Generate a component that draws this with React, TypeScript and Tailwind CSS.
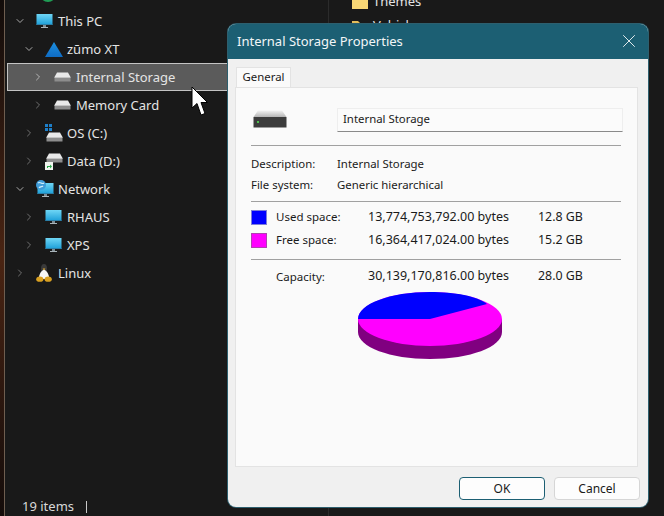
import { ChevronDown, ChevronRight, X } from "lucide-react";
import type { ReactNode } from "react";

function Monitor() {
  return (
    <svg width="17" height="16" viewBox="0 0 17 16">
      <defs>
        <linearGradient id="screen" x1="0" y1="0" x2="0" y2="1">
          <stop offset="0" stopColor="#6fd6f5" />
          <stop offset="1" stopColor="#1b9ed8" />
        </linearGradient>
      </defs>
      <rect x="0.5" y="1" width="16" height="11" fill="url(#screen)" />
      <rect x="0.5" y="11" width="16" height="1" fill="#2b7fa8" />
      <rect x="7" y="12" width="3" height="2" fill="#7d8b92" />
      <rect x="5" y="14" width="7" height="1" fill="#a9b4ba" />
    </svg>
  );
}

function Drive() {
  return (
    <svg width="17" height="10" viewBox="0 0 17 10">
      <path d="M3 0.5H14L16.5 5H0.5Z" fill="#e9e9e9" />
      <rect x="0.5" y="5" width="16" height="4.5" fill="#8d8d8d" />
      <rect x="0.5" y="5" width="16" height="1" fill="#c4c4c4" />
    </svg>
  );
}

function Delta() {
  return (
    <svg width="18" height="15" viewBox="0 0 18 15">
      <defs>
        <linearGradient id="delta" x1="0" y1="0" x2="0" y2="1">
          <stop offset="0" stopColor="#1c8fe0" />
          <stop offset="1" stopColor="#0f6cc4" />
        </linearGradient>
      </defs>
      <path d="M9 0L18 15H0Z" fill="url(#delta)" />
    </svg>
  );
}

function OsDrive() {
  return (
    <span className="relative block h-[18px] w-[18px]">
      <span className="absolute bottom-0 left-[1px] flex">
        <Drive />
      </span>
      <svg className="absolute left-0 top-0" width="7" height="7" viewBox="0 0 7 7">
        <rect width="3" height="3" fill="#1d7fc9" />
        <rect x="4" width="3" height="3" fill="#1d7fc9" />
        <rect y="4" width="3" height="3" fill="#1d7fc9" />
        <rect x="4" y="4" width="3" height="3" fill="#1d7fc9" />
      </svg>
    </span>
  );
}

function DataDrive() {
  return (
    <span className="relative block h-[18px] w-[18px]">
      <span className="absolute left-[1px] top-[1px] flex">
        <Drive />
      </span>
      <svg className="absolute bottom-0 left-0" width="8" height="8" viewBox="0 0 8 8">
        <rect width="8" height="8" fill="#f2f6f0" />
        <path d="M2 6V4H5V2.5L7 4.5L5 6.5V5H3V6Z" fill="#2aa84a" />
      </svg>
    </span>
  );
}

function NetworkIcon() {
  return (
    <span className="relative block h-[18px] w-[18px]">
      <span className="absolute left-[1px] top-[2px] flex">
        <Monitor />
      </span>
      <svg className="absolute left-0 top-0" width="10" height="10" viewBox="0 0 10 10">
        <circle cx="5" cy="5" r="5" fill="#3f9bd8" />
        <path d="M2 3C4 1 6 5 8 3M3 8C4 6 6 7 7 6" stroke="#cfeefa" strokeWidth="1.2" fill="none" />
      </svg>
    </span>
  );
}

function Tux() {
  return (
    <svg width="16" height="18" viewBox="0 0 16 18">
      <ellipse cx="8" cy="4.5" rx="3" ry="4.5" fill="#3a3a3a" />
      <path d="M8 5.5C5 7 2.5 11 3 15H13C13.5 11 11 7 8 5.5Z" fill="#f6f6f6" />
      <path d="M6.6 4.6H9.4L8 6.2Z" fill="#e6ac2a" />
      <ellipse cx="3.8" cy="15.2" rx="3.6" ry="2.6" fill="#d9a021" />
      <ellipse cx="12.2" cy="15.2" rx="3.6" ry="2.6" fill="#d9a021" />
    </svg>
  );
}

type Row = {
  label: string;
  level: number;
  open?: boolean;
  selected?: boolean;
  icon: ReactNode;
};

const treeRows: Row[] = [
  { label: "This PC", level: 0, open: true, icon: <Monitor /> },
  { label: "zūmo XT", level: 1, open: true, icon: <Delta /> },
  { label: "Internal Storage", level: 2, selected: true, icon: <Drive /> },
  { label: "Memory Card", level: 2, icon: <Drive /> },
  { label: "OS (C:)", level: 1, icon: <OsDrive /> },
  { label: "Data (D:)", level: 1, icon: <DataDrive /> },
  { label: "Network", level: 0, open: true, icon: <NetworkIcon /> },
  { label: "RHAUS", level: 1, icon: <Monitor /> },
  { label: "XPS", level: 1, icon: <Monitor /> },
  { label: "Linux", level: 0, icon: <Tux /> },
];

const indents = ["pl-[9px]", "pl-[18px]", "pl-[27px]"];

function TreeRow({ row }: { row: Row }) {
  return (
    <div
      className={`flex h-[28px] items-center ${
        row.selected ? "border border-[#c4c4c4] bg-[#5b5b5b] pl-[26px]" : indents[row.level]
      }`}
    >
      <span className="flex w-[20px] shrink-0 justify-start">
        {row.open ? (
          <ChevronDown size={12} strokeWidth={2} className="-ml-[2px] text-[#a8a8a8]" />
        ) : (
          <ChevronRight size={12} strokeWidth={2} className={`-ml-[2px] ${row.selected ? "text-[#b5b5b5]" : "text-[#6f6f6f]"}`} />
        )}
      </span>
      <span className="flex w-[22px] shrink-0 justify-start">{row.icon}</span>
      <span className="whitespace-nowrap pt-[2px] text-[13px] text-[#e4e4e4]">{row.label}</span>
    </div>
  );
}

function FolderIcon() {
  return (
    <svg width="16" height="13" viewBox="0 0 16 13" className="shrink-0">
      <path d="M0 1H6L8 3H16V13H0Z" fill="#e2bd5a" />
      <rect y="4" width="16" height="9" fill="#f8d775" />
    </svg>
  );
}

function Pie() {
  return (
    <svg width="146" height="70" viewBox="0 0 146 70">
      <path d="M1 28V41C1 56 33 68 73 68S145 56 145 41V28Z" fill="#800080" />
      <ellipse cx="73" cy="28" rx="72" ry="27" fill="#ff00ff" />
      <path d="M73 28H1C1 13 33 1 73 1C98 1 120 5 130 13Z" fill="#0000ff" />
    </svg>
  );
}

function Rule() {
  return <div className="h-px bg-[#a0a0a0]" />;
}

function SpaceRow({
  swatch,
  label,
  bytes,
  size,
}: {
  swatch?: string;
  label: string;
  bytes: string;
  size: string;
}) {
  return (
    <div className="flex h-[23px] items-center text-[11.5px]">
      <span className={`h-[15px] w-[16px] shrink-0 border ${swatch ?? "border-transparent"}`} />
      <span className="ml-[9px] w-[92px] shrink-0">{label}</span>
      <span className="w-[170px] shrink-0 text-[12.5px]">{bytes}</span>
      <span className="text-[12.4px]">{size}</span>
    </div>
  );
}

function PropertiesDialog() {
  return (
    <div className="absolute left-[228px] top-[24px] flex h-[483px] w-[420px] flex-col overflow-hidden rounded-lg bg-[#f0f0f0] text-[11.4px] text-[#1a1a1a] shadow-[0_0_0_1px_#2d5f6e]">
      <div className="flex h-[35px] shrink-0 items-center justify-between bg-[#1c5f73] pl-[9px] pr-[8px] pt-[1px] text-[#f2f6f7]">
        <span className="text-[13px]">Internal Storage Properties</span>
        <X size={22} strokeWidth={1} className="-mt-[2px]" />
      </div>
      <div className="flex-1 px-[7px] pt-[8px]">
        <div className="ml-[1px] flex h-[20px] w-[55px] items-center justify-center border border-b-0 border-[#e3e3e3] bg-[#fafafa] pb-[2px]">
          General
        </div>
        <div className="h-[380px] w-[403px] border border-[#e3e3e3] bg-[#fafafa] pl-[15px] pr-[16px]">
          <div className="flex h-[57px] items-start pt-[20px]">
            <svg width="34" height="18" viewBox="0 0 34 18" className="ml-[2px] mt-[2px] shrink-0">
              <defs>
                <linearGradient id="bigDrive" x1="0" y1="0" x2="0" y2="1">
                  <stop offset="0" stopColor="#f2f2f2" />
                  <stop offset="1" stopColor="#b5b5b5" />
                </linearGradient>
              </defs>
              <path d="M5 0.5H29L33.5 7H0.5Z" fill="url(#bigDrive)" />
              <rect x="0.5" y="7" width="33" height="10.5" fill="#3c3c3c" />
              <rect x="4" y="11" width="2" height="2" fill="#4fc04f" />
            </svg>
            <div className="ml-[50px] flex h-[24px] w-[286px] shrink-0 items-center border border-[#eeeeee] border-b-[#8a8a8a] bg-[#fbfbfb] pb-[2px] pl-[5px]">
              Internal Storage
            </div>
          </div>
          <Rule />
          <div className="flex h-[55px] flex-col justify-center gap-[4px] pt-[2px]">
            <div className="flex h-[17px] items-center">
              <span className="w-[86px]">Description:</span>
              <span>Internal Storage</span>
            </div>
            <div className="flex h-[17px] items-center">
              <span className="w-[86px]">File system:</span>
              <span>Generic hierarchical</span>
            </div>
          </div>
          <Rule />
          <div className="flex h-[57px] flex-col justify-center pb-[4px]">
            <SpaceRow swatch="border-[#7f7fd8] bg-[#0000ff]" label="Used space:" bytes="13,774,753,792.00 bytes" size="12.8 GB" />
            <SpaceRow swatch="border-[#b23fb2] bg-[#ff00ff]" label="Free space:" bytes="16,364,417,024.00 bytes" size="15.2 GB" />
          </div>
          <Rule />
          <div className="mt-[5px]">
            <SpaceRow label="Capacity:" bytes="30,139,170,816.00 bytes" size="28.0 GB" />
          </div>
          <div className="flex justify-center pr-[12px] pt-[3px]">
            <Pie />
          </div>
        </div>
      </div>
      <div className="flex h-[40px] shrink-0 items-start justify-end gap-[9px] pr-[8px] pt-[10px]">
        <button className="h-[23px] w-[86px] rounded-[4px] border border-[#1c5f73] bg-[#fdfdfd] text-[12px]">OK</button>
        <button className="h-[23px] w-[86px] rounded-[4px] border border-[#d6d6d6] bg-[#fdfdfd] text-[12px]">Cancel</button>
      </div>
    </div>
  );
}

export default function App() {
  return (
    <div className="relative flex h-[516px] w-[664px] overflow-hidden bg-[#191919] font-['Noto_Sans','Open_Sans',sans-serif]">
      {/* desktop showing behind the window */}
      <div className="w-[5px] shrink-0 border-r border-[#6e5e50] bg-gradient-to-b from-[#120c0a] via-[#4a2412] to-[#140c0a]" />

      <div className="flex w-[323px] shrink-0 flex-col">
        <div className="-mt-[35px] flex-1 pt-[14px] pl-[2px]">
          {/* row scrolled out of view, only the bottom of its icon shows */}
          <div className="flex h-[28px] items-center pl-[33px]">
            <span className="h-[18px] w-[16px] rounded-full bg-[#1f9d55]" />
          </div>
          {treeRows.map((row) => (
            <TreeRow key={row.label} row={row} />
          ))}
        </div>
        <div className="flex h-[20px] items-center pl-[17px] pt-[1px] text-[13px] text-[#d8d8d8]">
          <span>19 items</span>
          <span className="ml-[12px] h-[12px] w-px bg-[#c8c8c8]" />
        </div>
      </div>

      <div className="w-px shrink-0 bg-[#2b2b2b]" />

      <div className="-mt-[10px] flex flex-1 flex-col pl-[23px] text-[13px] text-[#e4e4e4]">
        <div className="flex h-[24px] items-center gap-[5px]">
          <FolderIcon />
          <span>Themes</span>
        </div>
        <div className="flex h-[24px] items-center gap-[5px]">
          <FolderIcon />
          <span>Vehicle</span>
        </div>
      </div>

      <PropertiesDialog />

      {/* mouse pointer */}
      <svg className="absolute left-[191px] top-[86px]" width="18" height="31" viewBox="0 0 18 31">
        <path d="M1 1V22L6 17.5L10 29L14 27.5L10 16.5H16.5Z" fill="#fff" stroke="#000" strokeWidth="1" />
      </svg>
    </div>
  );
}
